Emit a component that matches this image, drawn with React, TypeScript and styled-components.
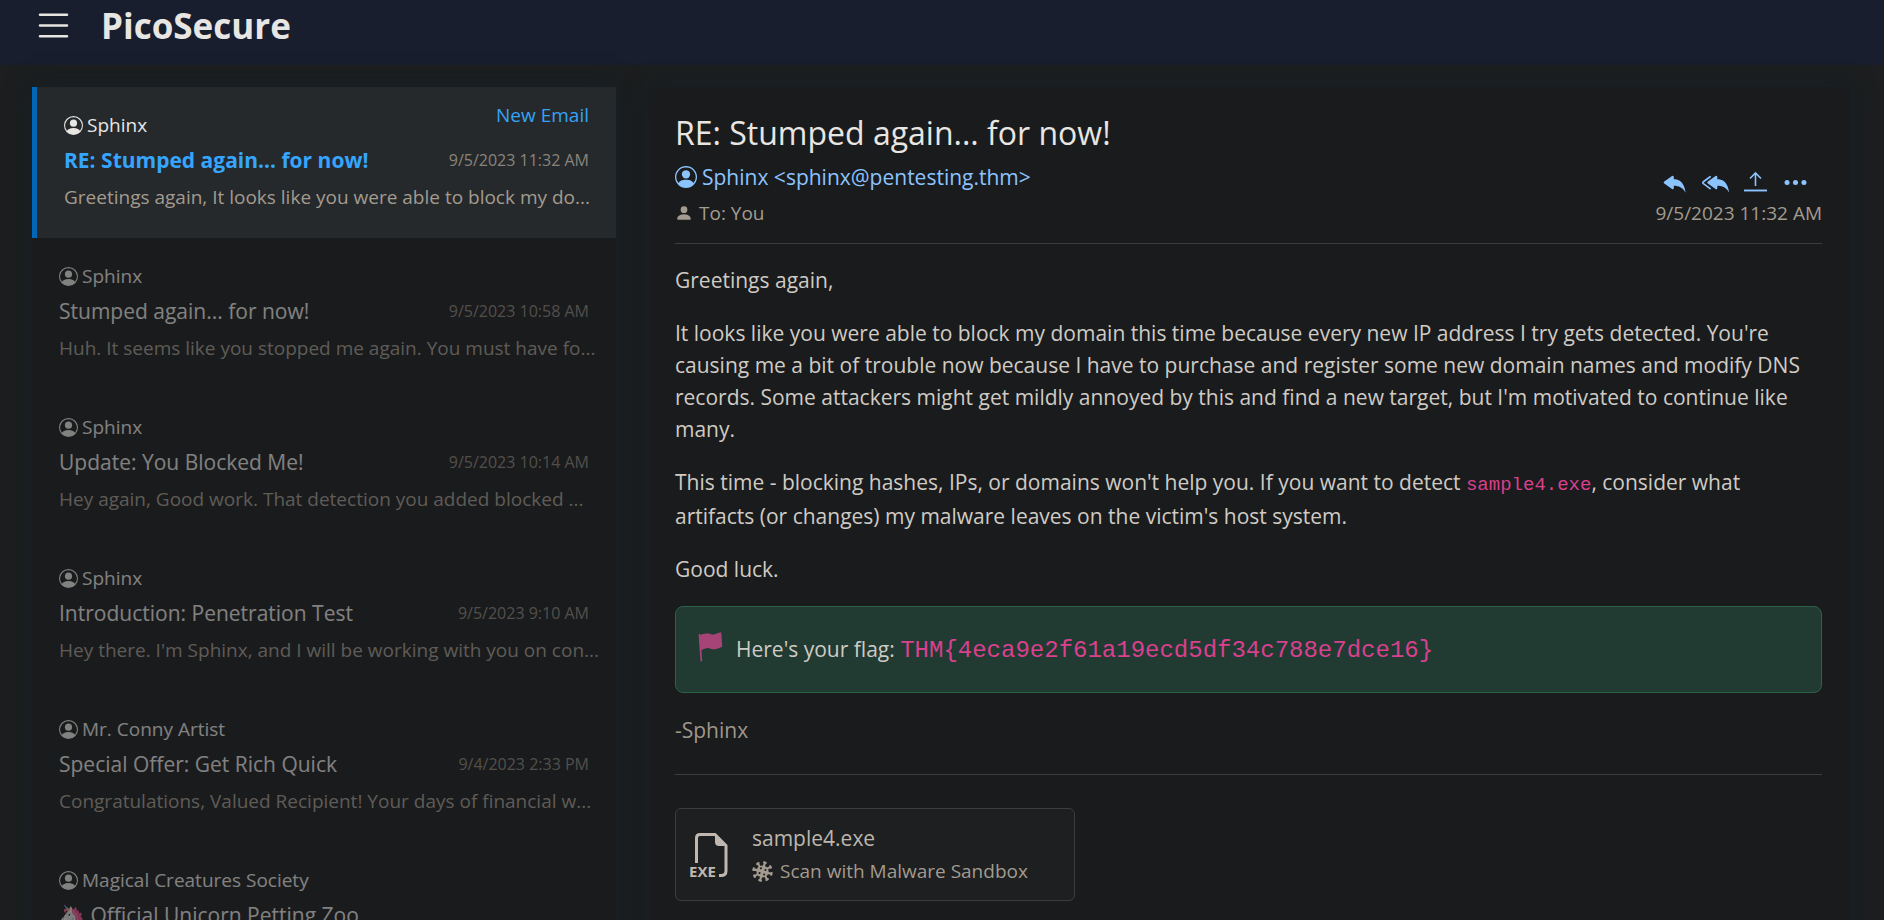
import React from "react";
import styled, { createGlobalStyle } from "styled-components";
import {
  BsList,
  BsPersonCircle,
  BsPersonFill,
  BsReplyFill,
  BsReplyAllFill,
  BsThreeDots,
  BsFlagFill,
} from "react-icons/bs";

const Global = createGlobalStyle`
  * { box-sizing: border-box; }
  html, body { margin: 0; background: #1c1e1f; overflow: hidden; }
  body { font-family: "Open Sans", sans-serif; font-size: 21px; line-height: 32px; color: #cfcbc4; }
  button { font: inherit; color: inherit; background: none; border: 0; padding: 0; cursor: pointer; text-align: left; }
  svg { display: block; flex: none; }
`;

const Page = styled.div`
  height: 100vh;
  display: flex;
  flex-direction: column;
  overflow: hidden;
`;

const Header = styled.header`
  flex: none;
  height: 65px;
  padding: 0 32px 14px;
  display: flex;
  align-items: center;
  gap: 26px;
  background: #181e2e;
  color: #e8e6e3;
`;

const Brand = styled.h1`
  margin: 0;
  font-size: 35px;
  line-height: 48px;
  font-weight: 700;
`;

const Main = styled.main`
  flex: 1;
  min-height: 0;
  padding: 22px 34px 0 32px;
  display: grid;
  grid-template-columns: minmax(0, 584fr) minmax(0, 1201fr);
  column-gap: 33px;
`;

const glow = "0 0 24px rgba(22, 32, 40, 0.9)";

const MailList = styled.nav`
  background: #1a1b1d;
  box-shadow: ${glow};
`;

const MailItem = styled.button<{ $active?: boolean }>`
  display: flex;
  flex-direction: column;
  justify-content: flex-start;
  align-items: stretch;
  width: 100%;
  height: 151px;
  padding: 20px 27px 0;
  border-left: ${(p) => (p.$active ? "5px solid #0067b8" : "0")};
  background: ${(p) => (p.$active ? "#25292c" : "transparent")};
`;

const Fade = styled.div<{ $on?: boolean }>`
  opacity: ${(p) => (p.$on ? 0.5 : 1)};
`;

const SenderRow = styled.div`
  display: flex;
  justify-content: space-between;
  font-size: 19px;
  line-height: 16px;
  color: #e8e6e3;
`;

const Sender = styled.span`
  display: flex;
  align-items: center;
  gap: 4px;
  padding-top: 8px;
  line-height: 20px;
`;

const Badge = styled.span`
  color: #36a3f5;
`;

const SubjectRow = styled.div<{ $tall?: boolean }>`
  display: flex;
  justify-content: space-between;
  align-items: center;
  height: ${(p) => (p.$tall ? 56 : 32)}px;
  margin-top: 9px;
`;

const Subject = styled.span<{ $active?: boolean }>`
  align-self: flex-start;
  font-weight: ${(p) => (p.$active ? 700 : 400)};
  color: ${(p) => (p.$active ? "#36a5ff" : "#e8e6e3")};
`;

const Time = styled.time`
  font-size: 16px;
  color: #8b847a;
`;

const Preview = styled.div`
  margin-top: 5px;
  font-size: 19px;
  white-space: nowrap;
  color: #a39b8f;
`;

const Reader = styled.article`
  padding: 26px 28px 0 26px;
  border-radius: 6px 6px 0 0;
  background: #1a1b1d;
  box-shadow: ${glow};
`;

const Title = styled.h2`
  margin: 0 0 6px;
  font-size: 32px;
  line-height: 40px;
  font-weight: 400;
  color: #e8e6e3;
`;

const MetaRow = styled.div`
  display: flex;
  justify-content: space-between;
  align-items: center;
  height: 36px;
  font-size: 19px;
  color: #a39b8f;
`;

const From = styled.a`
  display: flex;
  align-items: center;
  gap: 5px;
  font-size: 21px;
  color: #8bc3ff;
  text-decoration: none;
`;

const To = styled.span`
  display: flex;
  align-items: center;
  gap: 6px;
`;

const Actions = styled.div`
  display: flex;
  align-items: center;
  gap: 13px;
  padding: 10px 13px 0 0;
  color: #8bc3ff;
`;

const Rule = styled.hr`
  margin: 0;
  border: 0;
  border-top: 1px solid #3b3d3f;
`;

const Body = styled.div`
  margin-top: 12px;
  border-top: 1px solid #3b3d3f;
  padding: 20px 0 28px;
  p { margin: 0 0 21px; }
`;

const Code = styled.code<{ $large?: boolean }>`
  font-family: "Liberation Mono", monospace;
  font-size: ${(p) => (p.$large ? 24 : 19)}px;
  line-height: 30px;
  color: #d9408d;
`;

const Flag = styled.div`
  display: flex;
  align-items: center;
  gap: 12px;
  height: 87px;
  padding: 0 20px;
  margin-bottom: 21px;
  border: 1px solid #2c6148;
  border-radius: 8px;
  background: #213b33;
`;

const FlagIcon = styled.span`
  padding-bottom: 6px;
  color: #a64478;
  svg { transform: rotate(-4deg); }
`;

const Signature = styled.div`
  color: #9f978b;
`;

const Attachment = styled.div`
  display: flex;
  align-items: center;
  gap: 22px;
  width: 400px;
  height: 93px;
  margin-top: 33px;
  padding: 0 13px;
  border: 1px solid #3b3d3f;
  border-radius: 6px;
  background: #1d1f20;
`;

const FileName = styled.div`
  margin-bottom: 1px;
  color: #bdb7ae;
`;

const Scan = styled.button`
  display: flex;
  align-items: center;
  gap: 7px;
  font-size: 19px;
  color: #a39b8f;
`;

const Upload = () => (
  <svg width="27" height="27" viewBox="-1.500 -1.500 27 27" fill="none" stroke="currentColor">
    <path d="M12 15.500V3M6.500 8 12 2.500 17.500 8" strokeWidth="1.600" />
    <path d="M.500 20h23" strokeWidth="1.900" />
  </svg>
);

const ExeFile = () => (
  <svg width="41" height="46" viewBox="0 0 41 46" fill="none" stroke="#c0b8b0">
    <path d="M7.500 31V6Q7.500 2.500 11 2.500H26L37 13.500V39Q37 43.500 32 43.500H30" strokeWidth="3" />
    <path d="M26 2 38 14H30Q26 14 26 10Z" fill="#c0b8b0" stroke="none" />
    <text x="0" y="45" fill="#c0b8b0" stroke="none" fontFamily="Open Sans, sans-serif" fontWeight="700" fontSize="15">EXE</text>
  </svg>
);

const Virus = () => (
  <svg width="21" height="21" viewBox="0 0 20 20" fill="none" stroke="currentColor" strokeLinecap="round">
    {[15, 60, 105, 150, 195, 240, 285, 330].map((a) => (
      <path key={a} d="M10 5V1.200M9.200 1.200h1.600" transform={`rotate(${a} 10 10)`} strokeWidth="2.100" />
    ))}
    <circle cx="10" cy="10" r="5.800" fill="currentColor" stroke="none" />
    <g fill="#1d1f20" stroke="none">
      <circle cx="8.500" cy="7" r="1" />
      <circle cx="12.800" cy="8.500" r="1" />
      <circle cx="7.200" cy="11.500" r="1" />
      <circle cx="11.600" cy="12.800" r="1" />
    </g>
  </svg>
);

const mails = [
  { from: "Sphinx", subject: "RE: Stumped again... for now!", time: "9/5/2023 11:32 AM", text: "Greetings again, It looks like you were able to block my do..." },
  { from: "Sphinx", subject: "Stumped again... for now!", time: "9/5/2023 10:58 AM", text: "Huh. It seems like you stopped me again. You must have fo..." },
  { from: "Sphinx", subject: "Update: You Blocked Me!", time: "9/5/2023 10:14 AM", text: "Hey again, Good work. That detection you added blocked ..." },
  { from: "Sphinx", subject: "Introduction: Penetration Test", time: "9/5/2023 9:10 AM", text: "Hey there. I'm Sphinx, and I will be working with you on con..." },
  { from: "Mr. Conny Artist", subject: "Special Offer: Get Rich Quick", time: "9/4/2023 2:33 PM", text: "Congratulations, Valued Recipient! Your days of financial w..." },
  { from: "Magical Creatures Society", subject: "🦄 Official Unicorn Petting Zoo", time: "9/3/2023 4:48 PM", text: "", tall: true },
];

export default function App() {
  return (
    <Page>
      <Global />
      <Header>
        <button aria-label="Menu"><BsList size={43} /></button>
        <Brand>PicoSecure</Brand>
      </Header>
      <Main>
        <MailList aria-label="Inbox">
          {mails.map((m, i) => (
            <MailItem key={m.subject} $active={i === 0}>
              <Fade $on={i > 0}>
                <SenderRow>
                  <Sender><BsPersonCircle size={19} />{m.from}</Sender>
                  {i === 0 && <Badge>New Email</Badge>}
                </SenderRow>
                <SubjectRow $tall={m.tall}>
                  <Subject $active={i === 0}>{m.subject}</Subject>
                  <Time>{m.time}</Time>
                </SubjectRow>
                <Preview>{m.text}</Preview>
              </Fade>
            </MailItem>
          ))}
        </MailList>
        <Reader>
          <Title>RE: Stumped again... for now!</Title>
          <MetaRow>
            <From href="#sender"><BsPersonCircle size={22} />Sphinx &lt;sphinx@pentesting.thm&gt;</From>
            <Actions>
              <button aria-label="Reply"><BsReplyFill size={27} /></button>
              <button aria-label="Reply all"><BsReplyAllFill size={27} /></button>
              <button aria-label="Forward"><Upload /></button>
              <button aria-label="More"><BsThreeDots size={27} /></button>
            </Actions>
          </MetaRow>
          <MetaRow>
            <To><BsPersonFill size={18} />To: You</To>
            <time>9/5/2023 11:32 AM</time>
          </MetaRow>
          <Body>
            <p>Greetings again,</p>
            <p>It looks like you were able to block my domain this time because every new IP address I try gets detected. You're causing me a bit of trouble now because I have to purchase and register some new domain names and modify DNS records. Some attackers might get mildly annoyed by this and find a new target, but I'm motivated to continue like many.</p>
            <p>This time - blocking hashes, IPs, or domains won't help you. If you want to detect <Code>sample4.exe</Code>, consider what artifacts (or changes) my malware leaves on the victim's host system.</p>
            <p>Good luck.</p>
            <Flag>
              <FlagIcon><BsFlagFill size={28} /></FlagIcon>
              <span>Here's your flag: <Code $large>THM&#123;4eca9e2f61a19ecd5df34c788e7dce16&#125;</Code></span>
            </Flag>
            <Signature>-Sphinx</Signature>
          </Body>
          <Rule />
          <Attachment>
            <ExeFile />
            <div>
              <FileName>sample4.exe</FileName>
              <Scan><Virus />Scan with Malware Sandbox</Scan>
            </div>
          </Attachment>
        </Reader>
      </Main>
    </Page>
  );
}
